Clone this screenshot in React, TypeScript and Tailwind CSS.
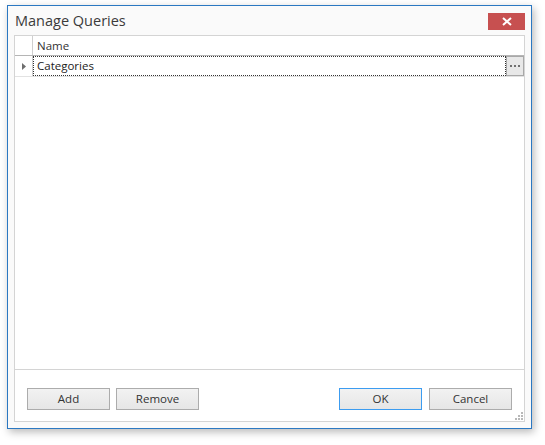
import React from 'react'

const font = { fontFamily: '"Open Sans", "Noto Sans", "Liberation Sans", sans-serif' }

function DialogButton({ label, primary }: { label: string; primary?: boolean }) {
  return (
    <button
      className={
        primary
          ? 'w-[83px] h-[22px] border border-[#3c9cf0] bg-gradient-to-b from-[#f2f2f2] to-[#e6e6e6] text-[11.5px] text-[#333] leading-none'
          : 'w-[83px] h-[22px] border border-[#acacac] bg-gradient-to-b from-[#f2f2f2] to-[#e6e6e6] text-[11.5px] text-[#333] leading-none'
      }
    >
      {label}
    </button>
  )
}

export default function App() {
  return (
    <div className="w-[545px] h-[445px] bg-white pt-[5px] pl-[7px]" style={font}>
      <div className="w-[525px] h-[424px] border border-[#2b78c2] bg-[#fafafa] shadow-[2px_3px_8px_rgba(0,0,0,0.28)] flex flex-col">
        {/* title bar */}
        <div className="h-[29px] flex items-center justify-between pl-[7px] pr-[6px]">
          <span className="text-[14.5px] text-[#3b3b3b] mt-[1px]">Manage Queries</span>
          <button className="w-[37px] h-[17px] bg-[#c75050] flex items-center justify-center mt-[2px]">
            <svg width="10" height="9" viewBox="0 0 10 9">
              <path d="M1 1 L9 8 M9 1 L1 8" stroke="white" strokeWidth="2" />
            </svg>
          </button>
        </div>

        {/* content panel */}
        <div className="ml-[6px] w-[511px] h-[387px] border border-[#d4d4d4] bg-white flex flex-col">
          <div className="flex-1 flex flex-col border-b border-[#d4d4d4]">
            {/* header */}
            <div className="h-[20px] flex border-b border-[#b5b5b5]">
              <div className="w-[18px] border-r border-[#cfcfcf]" />
              <div className="flex-1 flex items-center pl-[4px] text-[11.5px] text-[#333]">Name</div>
            </div>
            {/* row */}
            <div className="h-[21px] flex border-b border-[#e2e2e2]">
              <div className="w-[18px] border-r border-[#cfcfcf] flex items-center justify-center">
                <svg width="4" height="7" viewBox="0 0 4 7">
                  <path d="M0 0 L4 3.5 L0 7 Z" fill="#6e6e6e" />
                </svg>
              </div>
              <div className="flex-1 flex items-center pl-[3px] border border-dotted border-[#333] text-[11.5px] text-[#222]">
                Categories
              </div>
              <div className="w-[18px] border border-[#a8a8a8] bg-[#e8e8e8] flex items-center justify-center gap-[2px]">
                <span className="w-[2px] h-[2px] bg-[#707070]" />
                <span className="w-[2px] h-[2px] bg-[#707070]" />
                <span className="w-[2px] h-[2px] bg-[#707070]" />
              </div>
            </div>
          </div>
          {/* buttons */}
          <div className="h-[51px] flex pt-[18px] pl-[12px] pr-[12px] relative">
            <div className="flex gap-[6px]">
              <DialogButton label="Add" />
              <DialogButton label="Remove" />
            </div>
            <div className="flex gap-[7px] ml-auto">
              <DialogButton label="OK" primary />
              <DialogButton label="Cancel" />
            </div>
            <svg className="absolute right-[1px] bottom-[1px]" width="8" height="8" viewBox="0 0 8 8">
              <rect x="6" y="0" width="2" height="2" fill="#b8b8b8" />
              <rect x="3" y="3" width="2" height="2" fill="#b8b8b8" />
              <rect x="6" y="3" width="2" height="2" fill="#b8b8b8" />
              <rect x="0" y="6" width="2" height="2" fill="#b8b8b8" />
              <rect x="3" y="6" width="2" height="2" fill="#b8b8b8" />
              <rect x="6" y="6" width="2" height="2" fill="#b8b8b8" />
            </svg>
          </div>
        </div>
      </div>
    </div>
  )
}
